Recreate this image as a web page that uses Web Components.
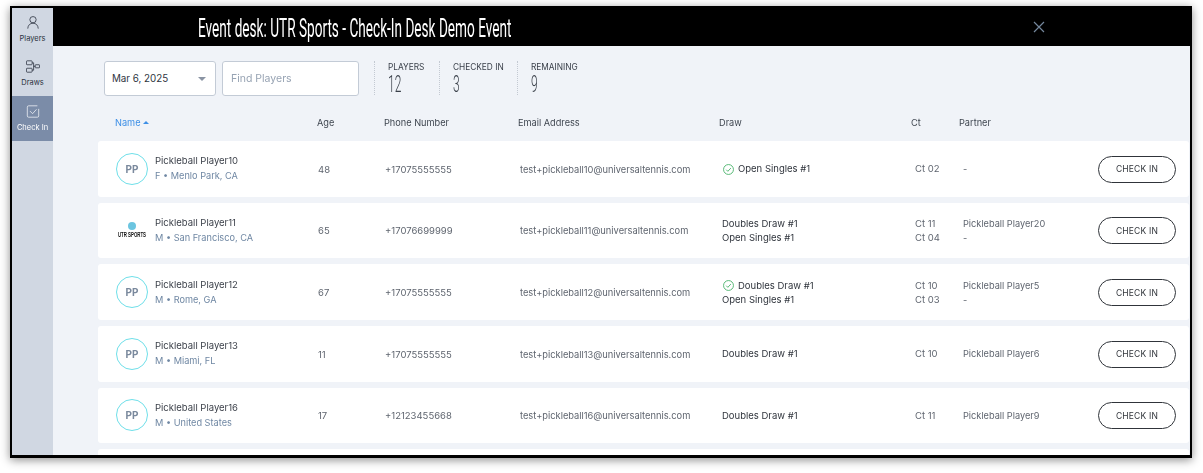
<!DOCTYPE html>
<html>
<head>
<meta charset="utf-8">
<style>
  html, body { margin: 0; background: #fff; height: 473px; overflow: hidden; }
  body { padding: 6px 11px 0 10px; font-family: Inter, "Liberation Sans", sans-serif; box-sizing: border-box; }
</style>
</head>
<body>
<desk-frame>
  <side-nav slot="nav">
    <nav-item label="Players"><svg viewBox="0 0 16 16"><circle cx="8" cy="4.800" r="3.600"/><path d="M2 15c.2-4 2.700-6.200 6-6.200s5.800 2.200 6 6.200"/></svg></nav-item>
    <nav-item label="Draws"><svg viewBox="0 0 16 16"><rect x=".5" y="1.500" width="6.500" height="4.500" rx=".8"/><rect x=".5" y="10" width="6.500" height="4.500" rx=".8"/><rect x="10.500" y="6" width="5" height="3.500" rx=".6"/><path d="M7 3.800h1.700v8.400H7M8.700 7.800h1.800"/></svg></nav-item>
    <nav-item label="Check In" active><svg viewBox="0 0 16 16"><path d="M14.500 5v8a1.500 1.500 0 0 1-1.500 1.500H3A1.500 1.500 0 0 1 1.500 13V3A1.500 1.500 0 0 1 3 1.500h10"/><path d="M4.500 7.500l3 3 4.500-5"/></svg></nav-item>
  </side-nav>
  <top-bar slot="top" title="Event desk: UTR Sports - Check-In Desk Demo Event"></top-bar>
  <desk-toolbar>
    <stat-box label="PLAYERS" value="12" style="width:65px"></stat-box>
    <stat-box label="CHECKED IN" value="3" style="width:78px"></stat-box>
    <stat-box label="REMAINING" value="9" style="width:78px"></stat-box>
  </desk-toolbar>
  <table-head></table-head>
  <player-list>
    <player-row name="Pickleball Player10" loc="F • Menlo Park, CA" age="48" phone="+17075555555" email="test+pickleball10@universaltennis.com">
      <draw-line slot="draw" done>Open Singles #1</draw-line>
      <div slot="ct">Ct 02</div>
      <div slot="partner">-</div>
    </player-row>
    <player-row logo name="Pickleball Player11" loc="M • San Francisco, CA" age="65" phone="+17076699999" email="test+pickleball11@universaltennis.com">
      <draw-line slot="draw">Doubles Draw #1</draw-line>
      <draw-line slot="draw">Open Singles #1</draw-line>
      <div slot="ct">Ct 11</div><div slot="ct">Ct 04</div>
      <div slot="partner">Pickleball Player20</div><div slot="partner">-</div>
    </player-row>
    <player-row name="Pickleball Player12" loc="M • Rome, GA" age="67" phone="+17075555555" email="test+pickleball12@universaltennis.com">
      <draw-line slot="draw" done>Doubles Draw #1</draw-line>
      <draw-line slot="draw">Open Singles #1</draw-line>
      <div slot="ct">Ct 10</div><div slot="ct">Ct 03</div>
      <div slot="partner">Pickleball Player5</div><div slot="partner">-</div>
    </player-row>
    <player-row name="Pickleball Player13" loc="M • Miami, FL" age="11" phone="+17075555555" email="test+pickleball13@universaltennis.com">
      <draw-line slot="draw">Doubles Draw #1</draw-line>
      <div slot="ct">Ct 10</div>
      <div slot="partner">Pickleball Player6</div>
    </player-row>
    <player-row name="Pickleball Player16" loc="M • United States" age="17" phone="+12123455668" email="test+pickleball16@universaltennis.com">
      <draw-line slot="draw">Doubles Draw #1</draw-line>
      <div slot="ct">Ct 11</div>
      <div slot="partner">Pickleball Player9</div>
    </player-row>
    <player-row blank></player-row>
  </player-list>
</desk-frame>

<script>
const COLS = "202px 67px 135px 202px 193px 48px 135px 78px";

class DeskFrame extends HTMLElement {
  constructor() {
    super();
    this.attachShadow({ mode: "open" });
    this.shadowRoot.innerHTML = `
    <style>
      :host {
        display: grid;
        grid-template-columns: 41px 1fr;
        grid-template-rows: 38px 1fr;
        width: 1182px;
        height: 452px;
        box-sizing: border-box;
        border: 2px solid #000;
        border-bottom-width: 3px;
        background: #f0f3f8;
        box-shadow: 0 2px 9px rgba(0,0,0,.45);
        overflow: hidden;
        filter: blur(.3px);
      }
      .nav { grid-row: 1 / 3; }
      .main { min-width: 0; overflow: hidden; }
    </style>
    <div class="nav"><slot name="nav"></slot></div>
    <slot name="top"></slot>
    <div class="main"><slot></slot></div>`;
  }
}

class SideNav extends HTMLElement {
  constructor() {
    super();
    this.attachShadow({ mode: "open" });
    this.shadowRoot.innerHTML = `
    <style>:host { display: block; height: 100%; background: #d0d7e2; }</style>
    <slot></slot>`;
  }
}

class NavItem extends HTMLElement {
  constructor() {
    super();
    this.attachShadow({ mode: "open" });
    this.shadowRoot.innerHTML = `
    <style>
      :host {
        display: flex; flex-direction: column; align-items: center;
        height: 44px; box-sizing: border-box; padding-top: 7px;
        color: #2b3240; font-size: 7.500px;
      }
      :host([active]) { background: #7b8ca8; color: #fff; height: 45px; padding-top: 8px; }
      ::slotted(svg) {
        width: 14px; height: 15px; fill: none;
        stroke: currentColor; stroke-width: .9; margin-bottom: 4px;
      }
      :host([active]) ::slotted(svg) { stroke: #eef1f6; }
    </style>
    <slot></slot><span>${this.getAttribute("label")}</span>`;
  }
}

class TopBar extends HTMLElement {
  constructor() {
    super();
    this.attachShadow({ mode: "open" });
    this.shadowRoot.innerHTML = `
    <style>
      :host {
        display: flex; align-items: center; position: relative;
        background: #000; color: #fff; height: 38px; padding-left: 144.500px;
      }
      .t {
        font: 400 25px Roboto, "Liberation Sans", sans-serif; white-space: nowrap;
        transform: scaleX(.545) translateY(1px); transform-origin: left center;
      }
      svg { position: absolute; left: 980px; top: 13px; width: 12px; height: 12px; stroke: #74879c; stroke-width: 1.200; fill: none; }
    </style>
    <span class="t">${this.getAttribute("title")}</span>
    <svg viewBox="0 0 12 12"><path d="M1 1l10 10M11 1L1 11"/></svg>`;
    this.removeAttribute("title");
  }
}

class DeskToolbar extends HTMLElement {
  constructor() {
    super();
    this.attachShadow({ mode: "open" });
    this.shadowRoot.innerHTML = `
    <style>
      :host { display: flex; padding: 15px 0 0 51px; height: 35px; font-size: 10.500px; }
      .box {
        height: 35px; box-sizing: border-box; background: #fff;
        border: 1px solid #c3cbd6; border-radius: 3px;
        display: flex; align-items: center; padding-left: 8px;
      }
      .sel { width: 112px; padding-left: 7px; color: #2f3642; position: relative; font-size: 9.800px; }
      .sel i {
        position: absolute; right: 9px; top: 15px; width: 0; height: 0;
        border: 4px solid transparent; border-top: 4px solid #8a94a3; border-bottom: 0;
      }
      .find { width: 137px; margin: 0 15px 0 6px; color: #97a3b3; font-size: 10.500px; }
      .stats { display: flex; }
    </style>
    <div class="box sel">Mar 6, 2025<i></i></div>
    <div class="box find">Find Players</div>
    <div class="stats"><slot></slot></div>`;
  }
}

class StatBox extends HTMLElement {
  constructor() {
    super();
    this.attachShadow({ mode: "open" });
    this.shadowRoot.innerHTML = `
    <style>
      :host {
        display: block; height: 34px; box-sizing: border-box;
        border-left: 1px dotted #c3c9d2; padding-left: 13px; color: #3a404a;
      }
      .l { font-size: 8.300px; line-height: 10px; margin-top: 1px; white-space: nowrap; }
      .v {
        font: 300 24px/25px Roboto, "Liberation Sans", sans-serif;
        transform: scaleX(.5); transform-origin: left center;
      }
    </style>
    <div class="l">${this.getAttribute("label")}</div>
    <div class="v">${this.getAttribute("value")}</div>`;
  }
}

class TableHead extends HTMLElement {
  constructor() {
    super();
    this.attachShadow({ mode: "open" });
    this.shadowRoot.innerHTML = `
    <style>
      :host {
        display: grid; grid-template-columns: 202px 67px 134px 201px 192px 48px 1fr;
        padding: 20px 0 0 62px; height: 25px; box-sizing: border-box;
        font-size: 9.200px; line-height: 14px; color: #3f4650;
      }
      .on { color: #3d8fe6; }
      .on i {
        display: inline-block; width: 0; height: 0; margin: 0 0 2px 0;
        border: 3px solid transparent; border-bottom: 3px solid #3d8fe6; border-top: 0;
      }
    </style>
    <div class="on">Name <i></i></div><div>Age</div><div>Phone Number</div><div>Email Address</div><div>Draw</div><div>Ct</div><div>Partner</div>`;
  }
}

class PlayerList extends HTMLElement {
  constructor() {
    super();
    this.attachShadow({ mode: "open" });
    this.shadowRoot.innerHTML = `
    <style>:host { display: grid; gap: 6px; margin: 20px 1px 0 45px; }</style>
    <slot></slot>`;
  }
}

class PlayerRow extends HTMLElement {
  constructor() {
    super();
    this.attachShadow({ mode: "open" });
    const a = (n) => this.getAttribute(n);
    const style = `
    <style>
      :host {
        display: grid; grid-template-columns: ${COLS}; align-items: center;
        height: 55.670px; padding: 1px 0 0 18px; box-sizing: border-box;
        background: #fff; border-radius: 3px; font-size: 9.500px; color: #5f656f;
      }
      .who { display: flex; align-items: center; gap: 7px; margin-top: -1px; }
      .txt { margin-top: -1px; }
      .av {
        width: 30px; height: 30px; border: 1px solid #6fdfe9; border-radius: 50%;
        display: flex; align-items: center; justify-content: center;
        color: #7a899d; font-weight: 700; font-size: 10px;
      }
      .logo { width: 32px; height: 32px; display: flex; flex-direction: column; align-items: center; justify-content: center; }
      .logo i { width: 8px; height: 8px; border-radius: 50%; background: #6cc5e0; margin-bottom: 1px; }
      .logo b { font: 700 6.500px/7px "Liberation Sans", sans-serif; color: #111; white-space: nowrap; transform: scaleX(.67); }
      .nm { color: #3d424b; line-height: 15px; white-space: nowrap; }
      .lc { color: #6f87a3; line-height: 15px; white-space: nowrap; font-size: 9.200px; }
      .em { font-size: 9.300px; }
      .stack { line-height: 14px; }
      .draw { color: #30353d; }
      .pt { font-size: 9.200px; }
      button {
        all: unset; box-sizing: border-box; width: 78px; height: 27px; border: 1px solid #30343a;
        border-radius: 14px; text-align: center; font-size: 8.500px; color: #30343a; letter-spacing: .2px;
      }
    </style>`;
    if (this.hasAttribute("blank")) { this.shadowRoot.innerHTML = style; return; }
    const pic = this.hasAttribute("logo")
      ? `<div class="logo"><i></i><b>UTR SPORTS</b></div>`
      : `<div class="av">PP</div>`;
    this.shadowRoot.innerHTML = style + `
    <div class="who">${pic}<div class="txt"><div class="nm">${a("name")}</div><div class="lc">${a("loc")}</div></div></div>
    <div>${a("age")}</div>
    <div>${a("phone")}</div>
    <div class="em">${a("email")}</div>
    <div class="stack draw"><slot name="draw"></slot></div>
    <div class="stack"><slot name="ct"></slot></div>
    <div class="stack pt"><slot name="partner"></slot></div>
    <button>CHECK IN</button>`;
  }
}

class DrawLine extends HTMLElement {
  constructor() {
    super();
    this.attachShadow({ mode: "open" });
    const done = this.hasAttribute("done");
    this.shadowRoot.innerHTML = `
    <style>
      :host { display: flex; align-items: center; gap: 4px; height: 14px; }
      svg { width: 11px; height: 11px; margin-left: 1px; fill: none; stroke: #4cb36c; stroke-width: 1; }
    </style>
    ${done ? `<svg viewBox="0 0 12 12"><circle cx="6" cy="6" r="5.400"/><path d="M3.500 6.200l1.800 1.800 3.300-3.600"/></svg>` : ""}
    <slot></slot>`;
  }
}

customElements.define("desk-frame", DeskFrame);
customElements.define("side-nav", SideNav);
customElements.define("nav-item", NavItem);
customElements.define("top-bar", TopBar);
customElements.define("desk-toolbar", DeskToolbar);
customElements.define("stat-box", StatBox);
customElements.define("table-head", TableHead);
customElements.define("player-list", PlayerList);
customElements.define("player-row", PlayerRow);
customElements.define("draw-line", DrawLine);
</script>
</body>
</html>
